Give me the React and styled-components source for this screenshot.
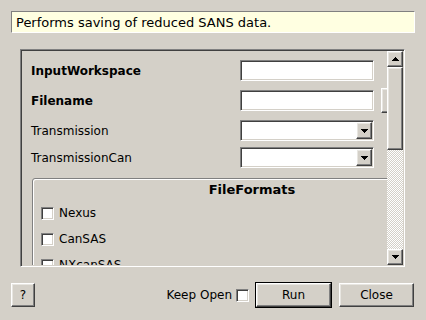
import React from "react";
import styled, { createGlobalStyle, css } from "styled-components";

const GlobalStyle = createGlobalStyle`
  html, body {
    margin: 0;
    padding: 0;
    background: #d4d0c8;
  }
  * {
    box-sizing: border-box;
  }
`;

const raised = css`
  background: #d4d0c8;
  border: 1px solid;
  border-color: #fff #404040 #404040 #fff;
  box-shadow: inset -1px -1px #808080, inset 1px 1px #e8e6e1;
`;

const sunken = css`
  background: #fff;
  border: 1px solid;
  border-color: #808080 #fff #fff #808080;
  box-shadow: inset 1px 1px #404040, inset -1px -1px #d4d0c8;
`;

const Dialog = styled.div`
  width: 426px;
  height: 320px;
  padding: 11px 11px 0 11px;
  display: flex;
  flex-direction: column;
  font-family: "DejaVu Sans", "Liberation Sans", sans-serif;
  font-size: 12px;
  color: #000;
  background: #d4d0c8;
  overflow: hidden;
`;

const Description = styled.div`
  height: 22px;
  padding-left: 4px;
  display: flex;
  align-items: center;
  font-size: 13px;
  background: #ffffe1;
  border: 1px solid;
  border-color: #808080 #fff #fff #808080;
`;

const ScrollFrame = styled.div`
  height: 218px;
  margin: 16px 10px 0 9px;
  display: flex;
  border: 1px solid;
  border-color: #808080 #fff #fff #808080;
  box-shadow: inset 1px 1px #404040, inset -1px -1px #d4d0c8;
  padding: 1px;
`;

const Viewport = styled.div`
  flex: 1;
  overflow: hidden;
  padding: 9px 0 0 9px;
`;

const Content = styled.div`
  width: 480px;
  display: flex;
  flex-direction: column;
`;

const FormRow = styled.div`
  display: flex;
  align-items: center;
  height: ${(p) => p.$h || 21}px;
  margin-top: ${(p) => p.$gap ?? 7}px;
  flex-shrink: 0;
`;

const Label = styled.div`
  width: 209px;
  font-weight: ${(p) => (p.$bold ? "bold" : "normal")};
`;

const TextField = styled.div`
  ${sunken};
  width: 134px;
  height: 21px;
`;

const Combo = styled.div`
  ${sunken};
  width: 134px;
  height: 21px;
  display: flex;
  justify-content: flex-end;
  padding: 1px;
`;

const ArrowButton = styled.div`
  ${raised};
  width: 16px;
  height: ${(p) => p.$h || 16}px;
  flex-shrink: 0;
  display: flex;
  align-items: center;
  justify-content: center;
`;

const BrowseButton = styled.div`
  ${raised};
  width: 24px;
  height: 25px;
  margin-left: 7px;
  flex-shrink: 0;
`;

const GroupBox = styled.div`
  width: 440px;
  margin: 10px 0 0 1px;
  border: 1px solid #808080;
  border-radius: 3px;
  box-shadow: inset 1px 1px #fff;
  display: flex;
  flex-direction: column;
`;

const GroupTitle = styled.div`
  height: 16px;
  margin-top: 3px;
  line-height: 16px;
  text-align: center;
  font-size: 13px;
  font-weight: bold;
`;

const CheckRow = styled.label`
  display: flex;
  align-items: center;
  gap: 5px;
  height: 26px;
  padding-left: 8px;
  flex-shrink: 0;
  &:first-of-type {
    margin-top: 2px;
  }
`;

const CheckBox = styled.span`
  ${sunken};
  width: 13px;
  height: 13px;
  display: inline-block;
  flex-shrink: 0;
`;

const VScroll = styled.div`
  width: 16px;
  display: flex;
  flex-direction: column;
`;

const Slider = styled.div`
  ${raised};
  height: 83px;
`;

const Trough = styled.div`
  flex: 1;
  background: repeating-conic-gradient(#fff 0 25%, #d4d0c8 0 50%) 0 0 / 2px 2px;
`;

const ButtonRow = styled.div`
  display: flex;
  align-items: center;
  height: 26px;
  margin-top: 15px;
  padding-right: 1px;
`;

const Button = styled.button`
  ${raised};
  width: ${(p) => p.$w || 75}px;
  height: 24px;
  padding: 0;
  font: inherit;
  color: #000;
  outline: ${(p) => (p.$default ? "1px solid #000" : "none")};
  margin-left: ${(p) => p.$ml || 0}px;
`;

const KeepOpen = styled.label`
  margin-left: auto;
  display: flex;
  align-items: center;
  gap: 4px;
`;

function Arrow({ up }) {
  return (
    <svg width="7" height="4" viewBox="0 0 7 4" shapeRendering="crispEdges">
      <polygon
        points={up ? "3.5,0 7,4 0,4" : "0,0 7,0 3.5,4"}
        fill="#000"
      />
    </svg>
  );
}

export default function App() {
  return (
    <>
      <GlobalStyle />
      <Dialog>
        <Description>Performs saving of reduced SANS data.</Description>
        <ScrollFrame>
          <Viewport>
            <Content>
              <FormRow $gap={0}>
                <Label $bold>InputWorkspace</Label>
                <TextField />
              </FormRow>
              <FormRow $h={25}>
                <Label $bold>Filename</Label>
                <TextField />
                <BrowseButton />
              </FormRow>
              <FormRow>
                <Label>Transmission</Label>
                <Combo>
                  <ArrowButton $h={17}>
                    <Arrow />
                  </ArrowButton>
                </Combo>
              </FormRow>
              <FormRow $gap={6}>
                <Label>TransmissionCan</Label>
                <Combo>
                  <ArrowButton $h={17}>
                    <Arrow />
                  </ArrowButton>
                </Combo>
              </FormRow>
              <GroupBox>
                <GroupTitle>FileFormats</GroupTitle>
                <CheckRow>
                  <CheckBox />
                  Nexus
                </CheckRow>
                <CheckRow>
                  <CheckBox />
                  CanSAS
                </CheckRow>
                <CheckRow>
                  <CheckBox />
                  NXcanSAS
                </CheckRow>
              </GroupBox>
            </Content>
          </Viewport>
          <VScroll>
            <ArrowButton>
              <Arrow up />
            </ArrowButton>
            <Slider />
            <Trough />
            <ArrowButton>
              <Arrow />
            </ArrowButton>
          </VScroll>
        </ScrollFrame>
        <ButtonRow>
          <Button $w={24}>?</Button>
          <KeepOpen>
            Keep Open
            <CheckBox />
          </KeepOpen>
          <Button $default $ml={7}>
            Run
          </Button>
          <Button $ml={8}>Close</Button>
        </ButtonRow>
      </Dialog>
    </>
  );
}
